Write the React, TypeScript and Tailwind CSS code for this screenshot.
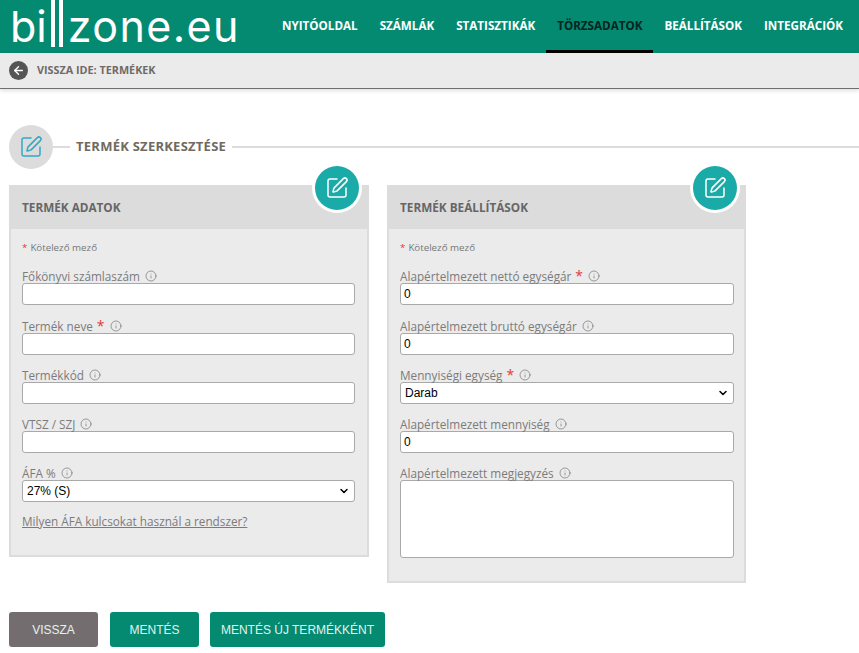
import { ArrowLeft, ChevronDown, Info, SquarePen } from 'lucide-react';
import type { ReactNode } from 'react';

const navItems = ['Nyitóoldal', 'Számlák', 'Statisztikák', 'Törzsadatok', 'Beállítások', 'Integrációk'];

function Field({ label, required, children, className }: { label: string; required?: boolean; children: ReactNode; className?: string }) {
    return (
        <div className={className}>
            <div className="flex h-[16px] items-center pt-[1px] text-[11.75px] leading-[16px] text-[#7b7b7b]">
                <span>{label}</span>
                {required && <span className="ml-[4px] text-[14px] leading-[14px] text-[#e03a3a]">*</span>}
                <Info size={12} strokeWidth={1.25} className="ml-[5px] text-[#666]" />
            </div>
            {children}
        </div>
    );
}

function TextInput({ value }: { value?: string }) {
    return (
        <input
            readOnly
            value={value ?? ''}
            className="block h-[22px] w-full rounded-[3px] border border-[#a9a9a9] bg-white px-[3px] font-['Liberation_Sans',sans-serif] text-[12px] text-black"
        />
    );
}

function SelectBox({ value }: { value: string }) {
    return (
        <div className="flex h-[22px] w-full items-center justify-between rounded-[3px] border border-[#a9a9a9] bg-white px-[4px] font-['Liberation_Sans',sans-serif] text-[12px] text-black">
            <span>{value}</span>
            <ChevronDown size={12} strokeWidth={3} />
        </div>
    );
}

function Card({ title, size, badge, pad, children }: { title: string; size: string; badge: string; pad: string; children: ReactNode }) {
    return (
        <div className={`relative border-2 border-[#dcdcdc] bg-[#ebebeb] ${size}`}>
            <div className="flex h-[42px] items-center bg-[#dcdcdc] pl-[11px] text-[11.75px] font-bold text-[#666]">{title}</div>
            <div className={`absolute top-[-24px] flex h-[50px] w-[50px] items-center justify-center rounded-full bg-white ${badge}`}>
                <div className="flex h-[44px] w-[44px] items-center justify-center rounded-full bg-[#1aaba8]">
                    <SquarePen size={24} strokeWidth={1.5} className="text-white" />
                </div>
            </div>
            <div className={`pt-[14px] pl-[11px] ${pad}`}>
                <div className="flex h-[11px] items-center text-[9.75px] text-[#777]">
                    <span className="mr-[3px] text-[#e03a3a]">*</span>Kötelező mező
                </div>
                {children}
            </div>
        </div>
    );
}

export default function App() {
    return (
        <div className="min-h-[653px] overflow-hidden bg-white font-['Open_Sans',sans-serif]">
            <header className="flex h-[53px] items-stretch bg-[#038a71] pr-[5px]">
                <div className="flex items-start pl-[10px] font-['Inter',sans-serif] text-[43px] leading-[52px] font-normal text-white">
                    <span>bi</span>
                    <span className="ml-[4px] h-[47px] w-[4px] bg-white" />
                    <span className="ml-[4px] h-[47px] w-[4px] bg-white" />
                    <span className="ml-[5px] tracking-[1.4px]">zone.eu</span>
                </div>
                <nav className="ml-auto flex">
                    {navItems.map((item) => (
                        <a
                            key={item}
                            className={
                                item === 'Törzsadatok'
                                    ? 'flex items-center border-b-[3px] border-black px-[11px] pt-[1px] text-[11.65px] font-bold text-[#06241f] uppercase'
                                    : 'flex items-center border-b-[3px] border-transparent px-[11px] pt-[1px] text-[11.65px] font-bold text-white uppercase'
                            }
                        >
                            {item}
                        </a>
                    ))}
                </nav>
            </header>

            <div className="flex h-[36px] items-center gap-[9px] border-b border-[#6f6f6f] bg-[#ebebeb] pl-[9px] text-[10.8px] font-bold text-[#6f6a66] uppercase shadow-[0_2px_4px_rgba(0,0,0,0.12)]">
                <span className="flex h-[19px] w-[19px] items-center justify-center rounded-full bg-[#555]">
                    <ArrowLeft size={13} strokeWidth={2.5} className="text-white" />
                </span>
                Vissza ide: termékek
            </div>

            <div className="mt-[36px] flex items-center pl-[9px]">
                <div className="flex h-[44px] w-[44px] items-center justify-center rounded-full bg-[#dcdcdc]">
                    <SquarePen size={24} strokeWidth={1.5} className="text-[#35a8c4]" />
                </div>
                <div className="h-[2px] w-[17px] bg-[#dcdcdc]" />
                <div className="px-[6px] text-[13px] font-bold tracking-[0.25px] text-[#6f6a5f] uppercase">Termék szerkesztése</div>
                <div className="h-[2px] flex-1 bg-[#dcdcdc]" />
            </div>

            <div className="mt-[16px] flex items-start gap-[18px] pl-[9px]">
                <Card title="TERMÉK ADATOK" size="h-[372px] w-[360px]" badge="right-[5px]" pad="pr-[12px]">
                    <Field label="Főkönyvi számlaszám" className="mt-[13px]">
                        <TextInput />
                    </Field>
                    <Field label="Termék neve" required className="mt-[12px]">
                        <TextInput />
                    </Field>
                    <Field label="Termékkód" className="mt-[11px]">
                        <TextInput />
                    </Field>
                    <Field label="VTSZ / SZJ" className="mt-[11px]">
                        <TextInput />
                    </Field>
                    <Field label="ÁFA %" className="mt-[11px]">
                        <SelectBox value="27% (S)" />
                    </Field>
                    <a className="mt-[11px] block text-[11.75px] text-[#7b7b7b] underline">Milyen ÁFA kulcsokat használ a rendszer?</a>
                </Card>
                <Card title="TERMÉK BEÁLLÍTÁSOK" size="h-[398px] w-[359px]" badge="right-[4px]" pad="pr-[10px]">
                    <Field label="Alapértelmezett nettó egységár" required className="mt-[13px]">
                        <TextInput value="0" />
                    </Field>
                    <Field label="Alapértelmezett bruttó egységár" className="mt-[12px]">
                        <TextInput value="0" />
                    </Field>
                    <Field label="Mennyiségi egység" required className="mt-[11px]">
                        <SelectBox value="Darab" />
                    </Field>
                    <Field label="Alapértelmezett mennyiség" className="mt-[11px]">
                        <TextInput value="0" />
                    </Field>
                    <Field label="Alapértelmezett megjegyzés" className="mt-[11px]">
                        <div className="h-[78px] w-full rounded-[3px] border border-[#a9a9a9] bg-white" />
                    </Field>
                </Card>
            </div>

            <div className="mt-[29px] flex pl-[9px] font-['Liberation_Sans',sans-serif] text-[12px] text-[#e4f3ee]">
                <button className="h-[35px] w-[89px] rounded-[3px] bg-[#736d70]">VISSZA</button>
                <button className="ml-[12px] h-[35px] w-[89px] rounded-[3px] bg-[#038a71]">MENTÉS</button>
                <button className="ml-[11px] h-[35px] w-[175px] rounded-[3px] bg-[#038a71]">MENTÉS ÚJ TERMÉKKÉNT</button>
            </div>
        </div>
    );
}
